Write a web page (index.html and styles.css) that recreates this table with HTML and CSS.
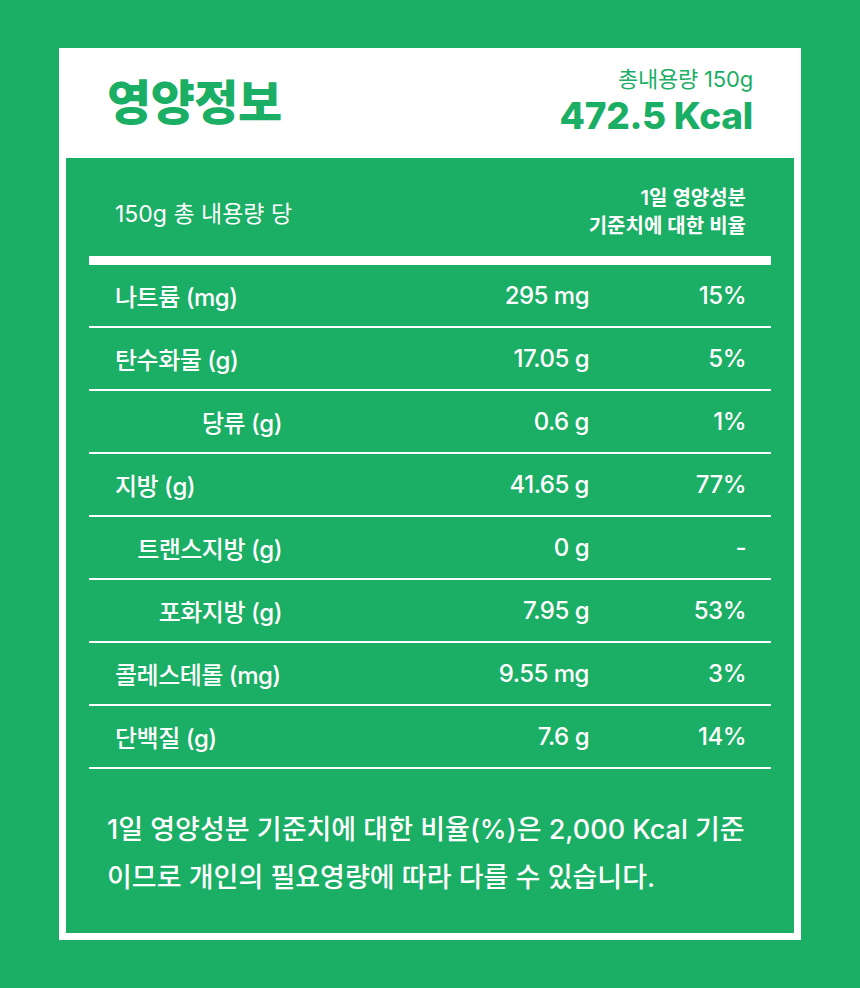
FILE: index.html
```html
<!DOCTYPE html>
<html lang="ko">
<head>
<meta charset="utf-8">
<link rel="stylesheet" href="styles.css">
</head>
<body>
<div class="card">
  <header class="head">
    <h1 class="title">영양정보</h1>
    <div class="total">
      <div class="amount">총내용량 150g</div>
      <div class="kcal">472.5 Kcal</div>
    </div>
  </header>
  <section class="panel">
    <div class="thead">
      <div class="per">150g 총 내용량 당</div>
      <div class="ratio">1일 영양성분<br>기준치에 대한 비율</div>
    </div>
    <div class="bar"></div>
    <div class="rows">
      <div class="row"><span class="lbl">나트륨 (mg)</span><span class="val">295 mg</span><span class="pct">15%</span></div>
      <div class="row"><span class="lbl">탄수화물 (g)</span><span class="val">17.05 g</span><span class="pct">5%</span></div>
      <div class="row"><span class="lbl sub">당류 (g)</span><span class="val">0.6 g</span><span class="pct">1%</span></div>
      <div class="row"><span class="lbl">지방 (g)</span><span class="val">41.65 g</span><span class="pct">77%</span></div>
      <div class="row"><span class="lbl sub">트랜스지방 (g)</span><span class="val">0 g</span><span class="pct">-</span></div>
      <div class="row"><span class="lbl sub">포화지방 (g)</span><span class="val">7.95 g</span><span class="pct">53%</span></div>
      <div class="row"><span class="lbl">콜레스테롤 (mg)</span><span class="val">9.55 mg</span><span class="pct">3%</span></div>
      <div class="row"><span class="lbl">단백질 (g)</span><span class="val">7.6 g</span><span class="pct">14%</span></div>
    </div>
    <p class="note">1일 영양성분 기준치에 대한 비율(%)은 2,000 Kcal 기준<br>이므로 개인의 필요영량에 따라 다를 수 있습니다.</p>
  </section>
</div>
</body>
</html>
```
FILE: styles.css
```css
html, body {
  margin: 0;
  padding: 0;
}
body {
  background: #1bae65;
  font-family: Inter, "Noto Sans CJK KR", sans-serif;
  width: 860px;
  height: 988px;
  padding-top: 48px;
  box-sizing: border-box;
}
.card {
  margin: 0 59px;
  background: #ffffff;
  height: 892px;
  padding: 0 7px 7px 7px;
  box-sizing: border-box;
  display: flex;
  flex-direction: column;
}
.head {
  height: 110px;
  display: flex;
  justify-content: space-between;
  align-items: flex-start;
  padding: 0 41px 0 41px;
  box-sizing: border-box;
}
.title {
  margin: 27px 0 0 0;
  font-size: 48px;
  font-weight: 800;
  color: #1bae65;
  letter-spacing: -0.5px;
  line-height: 56px;
}
.total {
  margin-top: 17px;
  text-align: right;
  color: #1bae65;
}
.amount {
  font-size: 22px;
  line-height: 28px;
  font-weight: 400;
  letter-spacing: -0.2px;
}
.kcal {
  font-size: 37px;
  font-weight: 800;
  line-height: 45px;
  letter-spacing: -0.3px;
}
.panel {
  flex: 1;
  background: #1bae65;
  color: #ffffff;
  padding: 0 23px;
  display: flex;
  flex-direction: column;
}
.thead {
  height: 98px;
  display: flex;
  justify-content: space-between;
  align-items: center;
  padding: 0 25px 0 26px;
}
.per {
  font-size: 23px;
  font-weight: 400;
  padding-top: 10px;
}
.ratio {
  font-size: 20px;
  font-weight: 600;
  line-height: 28px;
  text-align: right;
  padding-top: 10px;
}
.bar {
  height: 9px;
  background: #ffffff;
}
.rows {
  display: flex;
  flex-direction: column;
}
.row {
  height: 61px;
  border-bottom: 2px solid #ffffff;
  display: grid;
  grid-template-columns: 167px 1fr 157px;
  align-items: center;
  padding: 0 25px 0 26px;
  font-size: 24px;
  font-weight: 500;
  letter-spacing: -0.5px;
}
.lbl {
  text-align: left;
  white-space: nowrap;
}
.lbl.sub {
  text-align: right;
}
.val, .pct {
  text-align: right;
}
.note {
  margin: 37px 0 0 18px;
  font-size: 27px;
  font-weight: 500;
  line-height: 48px;
  white-space: nowrap;
}
```
